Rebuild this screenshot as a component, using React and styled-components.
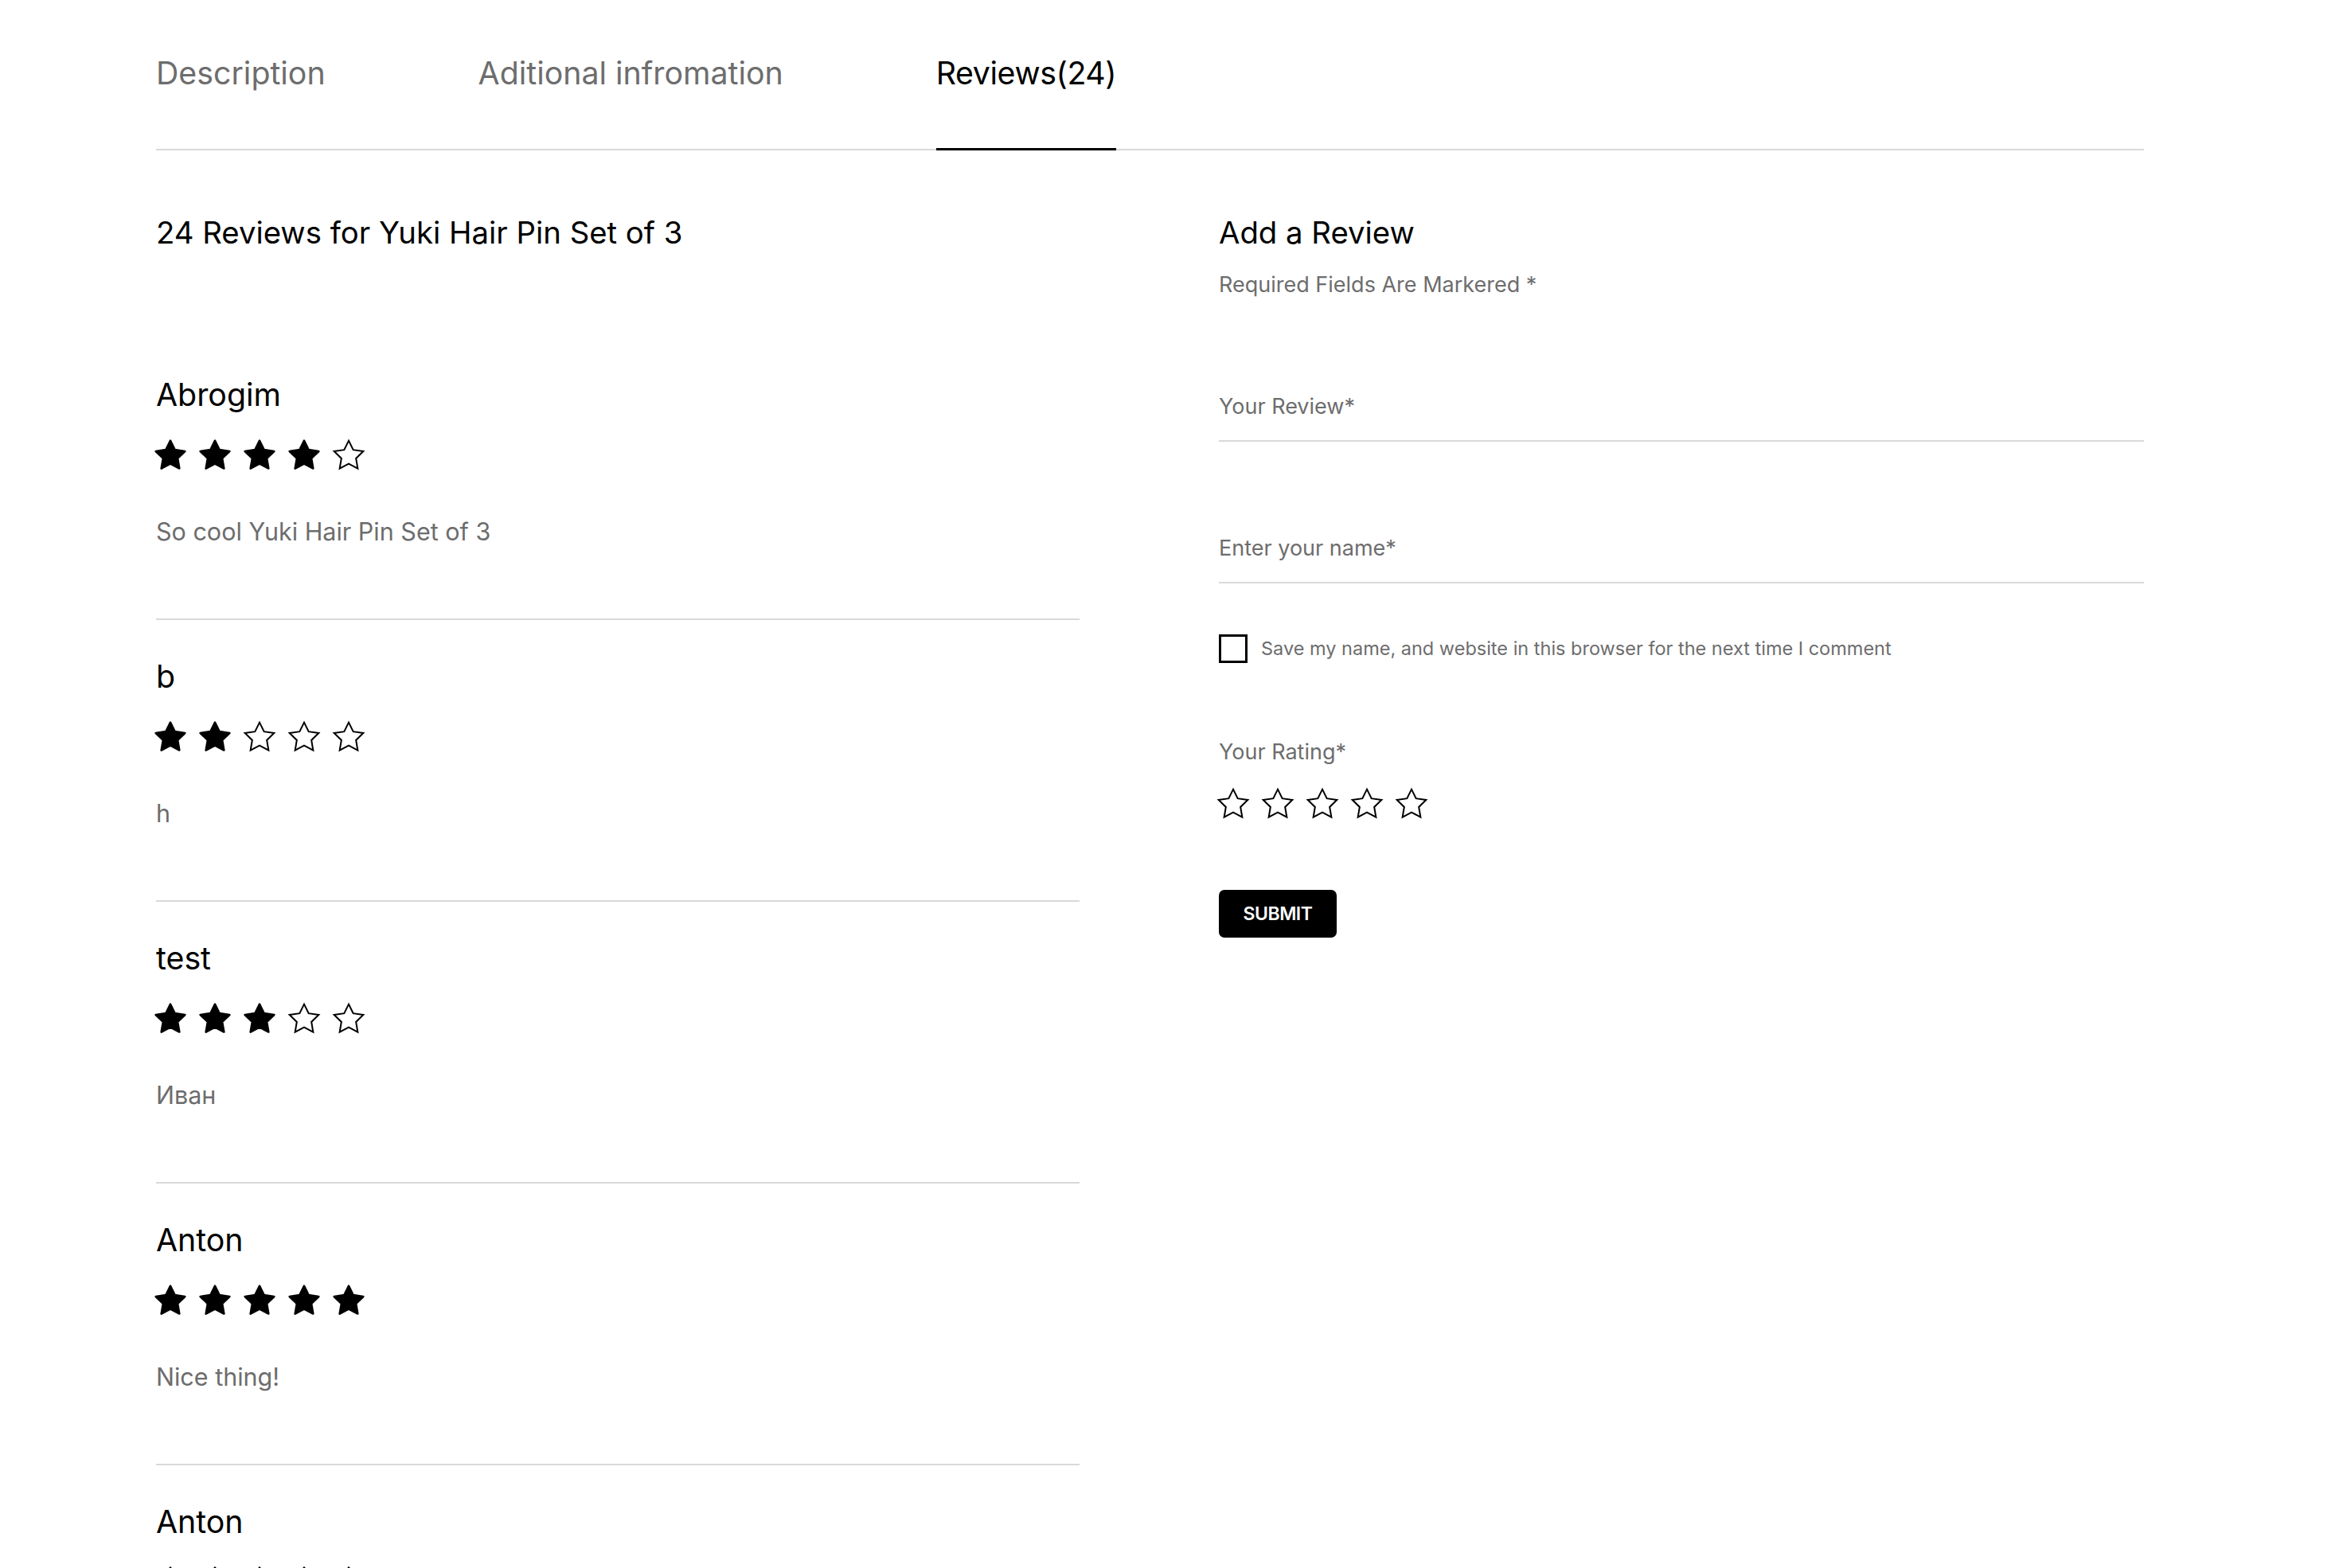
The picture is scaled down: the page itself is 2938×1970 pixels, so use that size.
import React from "react";
import styled, { createGlobalStyle } from "styled-components";

const GlobalStyle = createGlobalStyle`
  body {
    margin: 0;
    background: #ffffff;
    font-family: Inter, "Noto Sans", sans-serif;
    color: #000;
  }
`;

const Page = styled.main`
  width: 2497px;
  padding: 60px 0 0 196px;
`;

const TabBar = styled.nav`
  display: flex;
  gap: 192px;
  border-bottom: 2px solid #d9d9d9;
`;

const Tab = styled.div`
  font-size: 39.3px;
  line-height: 48px;
  padding: 8px 0 ${(p) => (p.$active ? "68px" : "71px")};
  color: ${(p) => (p.$active ? "#000" : "#6d6d6d")};
  border-bottom: ${(p) => (p.$active ? "3px solid #000" : "none")};
  margin-bottom: ${(p) => (p.$active ? "-2px" : "0")};
  letter-spacing: ${(p) => (p.$active ? "-0.4px" : "0")};
`;

const Columns = styled.section`
  display: grid;
  grid-template-columns: 1160px 1162px;
  column-gap: 175px;
  padding-top: 79px;
`;

const Heading = styled.h2`
  margin: 0;
  font-size: 38.3px;
  line-height: 48px;
  font-weight: 400;
`;

const ReviewList = styled.div`
  display: flex;
  flex-direction: column;
  margin-top: 109px;
`;

const Review = styled.article`
  padding: 47px 0 91px;
  border-bottom: 2px solid #d9d9d9;
`;

const Name = styled.h3`
  margin: 0;
  font-size: 39.3px;
  line-height: 48px;
  font-weight: 400;
`;

const Stars = styled.div`
  display: flex;
  gap: 12px;
  margin: ${(p) => p.$top || "30px"} 0 0 -4px;
`;

const Body = styled.p`
  margin: 56px 0 0;
  font-size: 30.5px;
  line-height: 36px;
  color: #6d6d6d;
`;

const Form = styled.form`
  display: flex;
  flex-direction: column;
  align-items: flex-start;
`;

const Note = styled.p`
  margin: 26px 0 0;
  font-size: 27px;
  line-height: 32px;
  color: #6d6d6d;
`;

const Field = styled.div`
  align-self: stretch;
  margin-top: ${(p) => p.$top};
  padding-bottom: 26px;
  border-bottom: 2px solid #d9d9d9;
  font-size: 27px;
  line-height: 32px;
  color: #6d6d6d;
`;

const CheckRow = styled.label`
  display: flex;
  align-items: center;
  gap: 17px;
  margin-top: 64px;
  font-size: 23.5px;
  line-height: 28px;
  color: #6d6d6d;
`;

const Box = styled.span`
  width: 36px;
  height: 36px;
  box-sizing: border-box;
  border: 3px solid #000;
  background: #fff;
`;

const Label = styled.div`
  margin-top: 96px;
  font-size: 27px;
  line-height: 32px;
  color: #6d6d6d;
`;

const Submit = styled.button`
  margin-top: 86px;
  width: 148px;
  height: 60px;
  border: none;
  border-radius: 7px;
  background: #000;
  color: #fff;
  font-family: Inter, sans-serif;
  font-size: 23px;
  font-weight: 600;
  letter-spacing: -0.5px;
`;

const STAR = "M12 2l3.09 6.26L22 9.27l-5 4.87 1.18 6.88L12 17.77l-6.18 3.25L7 14.14 2 9.27l6.91-1.01L12 2z";

const Star = ({ filled }) => (
  <svg width="44" height="44" viewBox="0 0 24 24">
    <path
      d={STAR}
      fill={filled ? "#000" : "none"}
      stroke="#000"
      strokeWidth={filled ? 1.4 : 1.1}
      strokeLinejoin={filled ? "round" : "miter"}
    />
  </svg>
);

const Rating = ({ value, top }) => (
  <Stars $top={top}>
    {[1, 2, 3, 4, 5].map((i) => (
      <Star key={i} filled={i <= value} />
    ))}
  </Stars>
);

const reviews = [
  { name: "Abrogim", rating: 4, text: "So cool Yuki Hair Pin Set of 3" },
  { name: "b", rating: 2, text: "h" },
  { name: "test", rating: 3, text: "Иван" },
  { name: "Anton", rating: 5, text: "Nice thing!" },
  { name: "Anton", rating: 5, text: "Nice thing!" },
];

export default function App() {
  return (
    <>
      <GlobalStyle />
      <Page>
        <TabBar>
          <Tab>Description</Tab>
          <Tab>Aditional infromation</Tab>
          <Tab $active>Reviews(24)</Tab>
        </TabBar>
        <Columns>
          <div>
            <Heading>24 Reviews for Yuki Hair Pin Set of 3</Heading>
            <ReviewList>
              {reviews.map((r, i) => (
                <Review key={i}>
                  <Name>{r.name}</Name>
                  <Rating value={r.rating} />
                  <Body>{r.text}</Body>
                </Review>
              ))}
            </ReviewList>
          </div>
          <Form>
            <Heading>Add a Review</Heading>
            <Note>Required Fields Are Markered *</Note>
            <Field $top="121px">Your Review*</Field>
            <Field $top="118px">Enter your name*</Field>
            <CheckRow>
              <Box />
              Save my name, and website in this browser for the next time I comment
            </CheckRow>
            <Label>Your Rating*</Label>
            <Rating value={0} top="27px" />
            <Submit type="button">SUBMIT</Submit>
          </Form>
        </Columns>
      </Page>
    </>
  );
}
